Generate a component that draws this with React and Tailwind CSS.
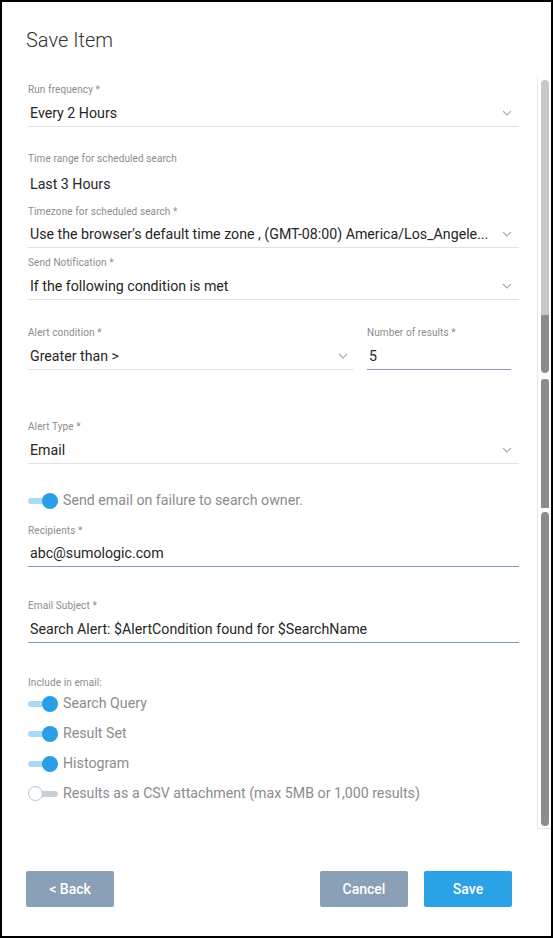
import React from 'react';

const font = { fontFamily: 'Roboto, "Liberation Sans", sans-serif' };

const Chevron = () => (
  <svg width="10" height="6" viewBox="0 0 10 6" className="shrink-0">
    <path d="M1 1 L5 5 L9 1" fill="none" stroke="#9fb0c2" strokeWidth="1.2" />
  </svg>
);

const Label = ({ children }) => (
  <div className="h-[12px] text-[10px] leading-[14px] text-[#8c8c8c] tracking-[0.1px]">{children}</div>
);

const Toggle = ({ on }) => (
  <div className="relative w-[30px] h-[16px] shrink-0">
    {on ? (
      <>
        <div className="absolute left-0 top-[5px] w-[26px] h-[6px] rounded-full bg-[#a8d9f6]" />
        <div className="absolute left-[14px] top-0 w-[16px] h-[16px] rounded-full bg-[#2b9fe6]" />
      </>
    ) : (
      <>
        <div className="absolute left-[8px] top-[5px] w-[22px] h-[6px] rounded-full bg-[#c7d0d9]" />
        <div className="absolute left-0 top-0 w-[15px] h-[15px] rounded-full bg-white border border-[#b8c3cf]" />
      </>
    )}
  </div>
);

const ToggleRow = ({ on, children, className }) => (
  <div className={`flex items-center gap-[5px] h-[20px] ${className}`}>
    <Toggle on={on} />
    <span className="text-[14.2px] text-[#8c8c8c]">{children}</span>
  </div>
);

export default function App() {
  return (
    <div style={font} className="w-[553px] h-[938px] border-2 border-black bg-white flex flex-col">
      <div className="h-[75px] pl-[24px] pt-[26px]">
        <h1 className="text-[20px] leading-[24px] font-light text-[#333]">Save Item</h1>
      </div>

      <div className="h-[752px] flex">
        <div className="w-[517px] pl-[26px] flex flex-col">
          <div className="mt-[6px]">
            <Label>Run frequency *</Label>
            <div className="mt-[8px] pb-[3px] border-b border-[#e2e2e2] flex items-center justify-between pr-[7px]">
              <span className="h-[20px] pl-[2px] text-[14.2px] leading-[20px] text-[#262626]">Every 2 Hours</span>
              <Chevron />
            </div>
          </div>

          <div className="mt-[25px]">
            <Label>Time range for scheduled search</Label>
            <div className="mt-[10px] h-[20px] pl-[2px] text-[14.2px] leading-[20px] text-[#262626]">Last 3 Hours</div>
          </div>

          <div className="mt-[11px]">
            <Label>Timezone for scheduled search *</Label>
            <div className="mt-[7px] pb-[3px] border-b border-[#e2e2e2] flex items-center justify-between pr-[7px]">
              <span className="h-[20px] pl-[2px] text-[14.2px] leading-[20px] text-[#262626] whitespace-nowrap">Use the browser's default time zone , (GMT-08:00) America/Los_Angele...</span>
              <Chevron />
            </div>
          </div>

          <div className="mt-[8px]">
            <Label>Send Notification *</Label>
            <div className="mt-[8px] pb-[3px] border-b border-[#e2e2e2] flex items-center justify-between pr-[7px]">
              <span className="h-[20px] pl-[2px] text-[14.2px] leading-[20px] text-[#262626]">If the following condition is met</span>
              <Chevron />
            </div>
          </div>

          <div className="mt-[26px] flex gap-[13px]">
            <div className="w-[326px]">
              <Label>Alert condition *</Label>
              <div className="mt-[8px] pb-[3px] border-b border-[#e2e2e2] flex items-center justify-between pr-[6px]">
                <span className="h-[20px] pl-[2px] text-[14.2px] leading-[20px] text-[#262626]">Greater than &gt;</span>
                <Chevron />
              </div>
            </div>
            <div className="w-[144px]">
              <Label>Number of results *</Label>
              <div className="mt-[8px] pb-[3px] border-b border-[#8a9db3]">
                <div className="h-[20px] pl-[2px] text-[14.2px] leading-[20px] text-[#262626]">5</div>
              </div>
            </div>
          </div>

          <div className="mt-[50px]">
            <Label>Alert Type *</Label>
            <div className="mt-[8px] pb-[3px] border-b border-[#e2e2e2] flex items-center justify-between pr-[7px]">
              <span className="h-[20px] pl-[2px] text-[14.2px] leading-[20px] text-[#262626]">Email</span>
              <Chevron />
            </div>
          </div>

          <ToggleRow on className="mt-[27px]">Send email on failure to search owner.</ToggleRow>

          <div className="mt-[13px]">
            <Label>Recipients *</Label>
            <div className="mt-[7px] pb-[3px] border-b border-[#7f98b4]">
              <div className="h-[20px] pl-[2px] text-[14.2px] leading-[20px] text-[#262626]">abc@sumologic.com</div>
            </div>
          </div>

          <div className="mt-[32px]">
            <Label>Email Subject *</Label>
            <div className="mt-[8px] pb-[3px] border-b border-[#7f98b4]">
              <div className="h-[20px] pl-[2px] text-[14.2px] leading-[20px] text-[#262626]">Search Alert: $AlertCondition found for $SearchName</div>
            </div>
          </div>

          <div className="mt-[33px]">
            <Label>Include in email:</Label>
          </div>
          <ToggleRow on className="mt-[6px]">Search Query</ToggleRow>
          <ToggleRow on className="mt-[10px]">Result Set</ToggleRow>
          <ToggleRow on className="mt-[10px]">Histogram</ToggleRow>
          <ToggleRow on={false} className="mt-[10px]">Results as a CSV attachment (max 5MB or 1,000 results)</ToggleRow>
        </div>

        <div className="ml-[18px] w-[14px] h-[752px] border-l border-b border-[#e6e6e6] pl-[3px] flex flex-col">
          <div className="mt-[3px] w-[8px] h-[235px] rounded-t-full bg-[#c8c8c8]" />
          <div className="w-[8px] h-[58px] rounded-b-[4px] bg-[#8c8c8c]" />
          <div className="mt-[6px] w-[8px] h-[129px] rounded-t-[3px] bg-[#8c8c8c]" />
          <div className="mt-[4px] w-[8px] h-[314px] rounded-[4px] bg-[#8c8c8c]" />
        </div>
      </div>

      <div className="pt-[42px] pl-[24px] pr-[39px] flex items-center">
        <button className="w-[88px] h-[36px] rounded-[2px] bg-[#8aa0b6] text-white text-[14px] font-medium">&lt; Back</button>
        <div className="flex-1" />
        <button className="w-[88px] h-[36px] rounded-[2px] bg-[#8aa0b6] text-white text-[14px] font-medium">Cancel</button>
        <button className="ml-[16px] w-[88px] h-[36px] rounded-[2px] bg-[#2ba1e6] text-white text-[14px] font-medium">Save</button>
      </div>
    </div>
  );
}
